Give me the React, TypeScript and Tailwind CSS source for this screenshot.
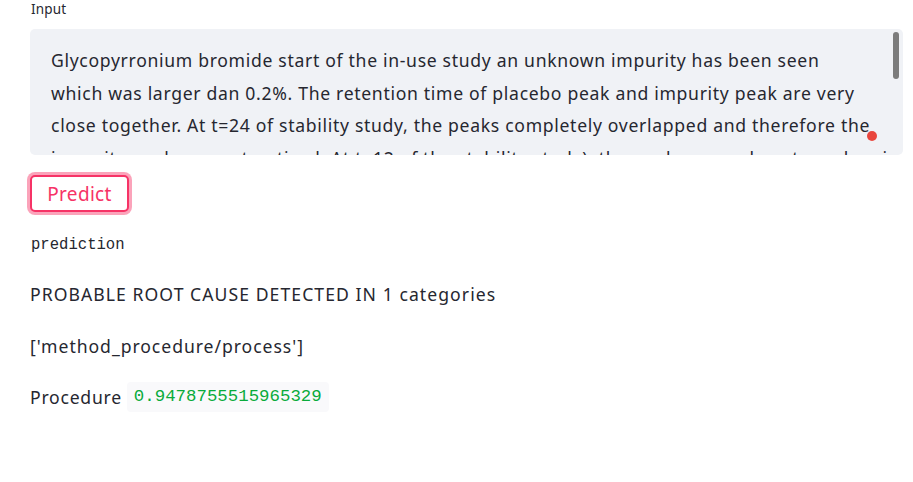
import React from "react";

const lines = [
  "Glycopyrronium bromide start of the in-use study an unknown impurity has been seen",
  "which was larger dan 0.2%. The retention time of placebo peak and impurity peak are very",
  "close together. At t=24 of stability study, the peaks completely overlapped and therefore the",
  "impurity peak was not noticed. At t=12 of the stability study), the peaks were almost overlapping",
];

export default function App() {
  return (
    <div className="min-h-screen bg-white text-[#262730] font-['Noto_Sans',sans-serif] pl-[30px] pr-[10px]">
      <div className="text-[13.5px] leading-[18px] pl-px tracking-[0.2px]">Input</div>

      {/* text area */}
      <div className="relative mt-[11px] h-[126px] rounded-[5px] bg-[#f0f2f6] overflow-hidden">
        <div className="pl-[21px] pr-[30px] pt-[15px] text-[17.6px] leading-[32.5px] tracking-[0.68px] whitespace-nowrap">
          {lines.map((l, i) => (
            <div key={i}>{l}</div>
          ))}
        </div>
        <div className="absolute right-[4px] top-[3px] w-[6px] h-[47px] rounded-full bg-[#7c7c7c]" />
        <div className="absolute right-[26px] top-[102px] w-[10px] h-[10px] rounded-full bg-[#e9463d]" />
      </div>

      <button className="mt-[20px] w-[99px] h-[37px] pt-px rounded-[5px] border-2 border-[#f63366] ring-[3px] ring-[#f63366]/45 text-[#f63366] text-[19px] leading-none tracking-[0.3px] bg-white">
        Predict
      </button>

      <div className="mt-[23px] font-['Liberation_Mono',monospace] text-[15.6px] leading-[20px] pl-px">prediction</div>

      <div className="mt-[27px] text-[17.6px] leading-[24px] tracking-[1.06px]">PROBABLE ROOT CAUSE DETECTED IN 1 categories</div>

      <div className="mt-[28px] text-[17.6px] leading-[24px] tracking-[0.95px]">['method_procedure/process']</div>

      <div className="mt-[24px] flex items-center gap-[5px] text-[17.6px] leading-[24px]">
        <span className="tracking-[0.75px]">Procedure</span>
        <code className="px-[7px] py-[3px] rounded-[4px] bg-[#f9f9fb] text-[#09ab3b] font-['Liberation_Mono',monospace] text-[17.4px] leading-[24px]">
          0.9478755515965329
        </code>
      </div>
    </div>
  );
}
